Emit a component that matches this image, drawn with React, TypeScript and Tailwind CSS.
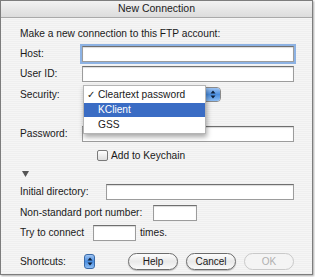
import React from 'react';

const font = { fontFamily: '"Liberation Sans", Arial, sans-serif' };

const TextField: React.FC<{ className?: string; focused?: boolean }> = ({ className = '', focused }) => (
  <div
    className={`h-[16px] bg-white border border-[#9c9c9c] border-t-[#6f6f6f] shadow-[inset_0_1px_1px_rgba(0,0,0,0.15)] ${
      focused ? 'outline outline-2 outline-[#8db2e3] outline-offset-0' : ''
    } ${className}`}
  />
);

const AquaButton: React.FC<{ label: string; disabled?: boolean }> = ({ label, disabled }) => (
  <div
    className={`w-[50px] h-[17px] rounded-full border flex items-center justify-center text-[10px] ${
      disabled
        ? 'border-[#c9c9c9] text-[#b0b0b0] bg-[#f4f4f4]'
        : 'border-[#6c6c6c] text-[#1a1a1a] bg-gradient-to-b from-[#fdfdfd] via-[#e9e9e9] to-[#fafafa] shadow-[0_1px_1px_rgba(0,0,0,0.25)]'
    }`}
  >
    {label}
  </div>
);

const BlueArrows: React.FC = () => (
  <svg width="6" height="9" viewBox="0 0 6 9">
    <path d="M3 0.5 L5.5 3.5 L0.5 3.5 Z" fill="#0d1f3a" />
    <path d="M3 8.5 L5.5 5.5 L0.5 5.5 Z" fill="#0d1f3a" />
  </svg>
);

const App: React.FC = () => {
  return (
    <div className="w-[315px] h-[277px] bg-white" style={font}>
      <div className="relative w-[313px] h-[275px] border border-[#7d7d7d] flex flex-col shadow-[1px_1px_2px_rgba(0,0,0,0.35)] bg-[repeating-linear-gradient(to_bottom,#efefef_0px,#efefef_1px,#f5f5f5_1px,#f5f5f5_2px)] text-[#1a1a1a]">
        {/* title bar */}
        <div className="h-[17px] shrink-0 flex items-center justify-center border-b border-[#a9a9a9] bg-gradient-to-b from-[#f2f2f2] to-[#dcdcdc] text-[10.5px] text-[#222]">
          New Connection
        </div>

        <div className="flex flex-col pl-[19px] pr-[18px] text-[10.2px]">
          <div className="mt-[9px] h-[14px] flex items-center">Make a new connection to this FTP account:</div>

          <div className="mt-[5px] flex items-center">
            <span className="w-[62px]">Host:</span>
            <TextField className="flex-1" focused />
          </div>

          <div className="mt-[4px] flex items-center">
            <span className="w-[62px]">User ID:</span>
            <TextField className="flex-1" />
          </div>

          <div className="mt-[5px] flex items-center h-[15px]">
            <span className="w-[63px]">Security:</span>
            <div className="w-[138px] h-[15px] flex rounded-[4px] border border-[#8a8a8a] bg-white overflow-hidden">
              <div className="flex-1" />
              <div className="w-[15px] h-full flex items-center justify-center bg-gradient-to-b from-[#9dc3f2] via-[#4a8ee0] to-[#8bbcf3] border-l border-[#3a6aa8]">
                <BlueArrows />
              </div>
            </div>
          </div>

          <div className="mt-[24px] flex items-center">
            <span className="w-[62px]">Password:</span>
            <TextField className="flex-1" />
          </div>

          <div className="mt-[8px] flex items-center h-[11px] pl-[77px] gap-[3px]">
            <div className="w-[11px] h-[11px] rounded-[2px] border border-[#7a7a7a] bg-gradient-to-b from-[#ffffff] to-[#dedede]" />
            <span>Add to Keychain</span>
          </div>

          <div className="mt-[9px] h-[8px] flex items-center pl-[2px]">
            <svg width="7" height="6" viewBox="0 0 7 6">
              <path d="M0 0 L7 0 L3.5 6 Z" fill="#555" />
            </svg>
          </div>

          <div className="mt-[6px] flex items-center">
            <span className="w-[86px]">Initial directory:</span>
            <TextField className="flex-1" />
          </div>

          <div className="mt-[5px] flex items-center">
            <span className="w-[133px]">Non-standard port number:</span>
            <TextField className="w-[44px]" />
          </div>

          <div className="mt-[4px] flex items-center">
            <span className="w-[73px]">Try to connect</span>
            <TextField className="w-[43px]" />
            <span className="ml-[4px]">times.</span>
          </div>

          <div className="mt-[12px] flex items-center h-[17px]">
            <span className="w-[64px]">Shortcuts:</span>
            <div className="w-[11px] h-[15px] rounded-[3px] border border-[#3a6aa8] flex items-center justify-center bg-gradient-to-b from-[#9dc3f2] via-[#4a8ee0] to-[#8bbcf3]">
              <BlueArrows />
            </div>
            <div className="ml-auto flex gap-[8px]">
              <AquaButton label="Help" />
              <AquaButton label="Cancel" />
              <AquaButton label="OK" disabled />
            </div>
          </div>
        </div>

        {/* open popup menu */}
        <div className="absolute left-[82px] top-[84px] w-[123px] py-[1px] bg-white border border-[#b5b5b5] shadow-[1px_3px_5px_rgba(0,0,0,0.35)] text-[10.2px]">
          <div className="h-[16px] flex items-center">
            <span className="w-[14px] text-center">✓</span>
            <span>Cleartext password</span>
          </div>
          <div className="h-[14px] flex items-center bg-[#3a6cc4] text-white pl-[14px]">KClient</div>
          <div className="h-[15px] flex items-center pl-[14px]">GSS</div>
        </div>
      </div>
    </div>
  );
};

export default App;
